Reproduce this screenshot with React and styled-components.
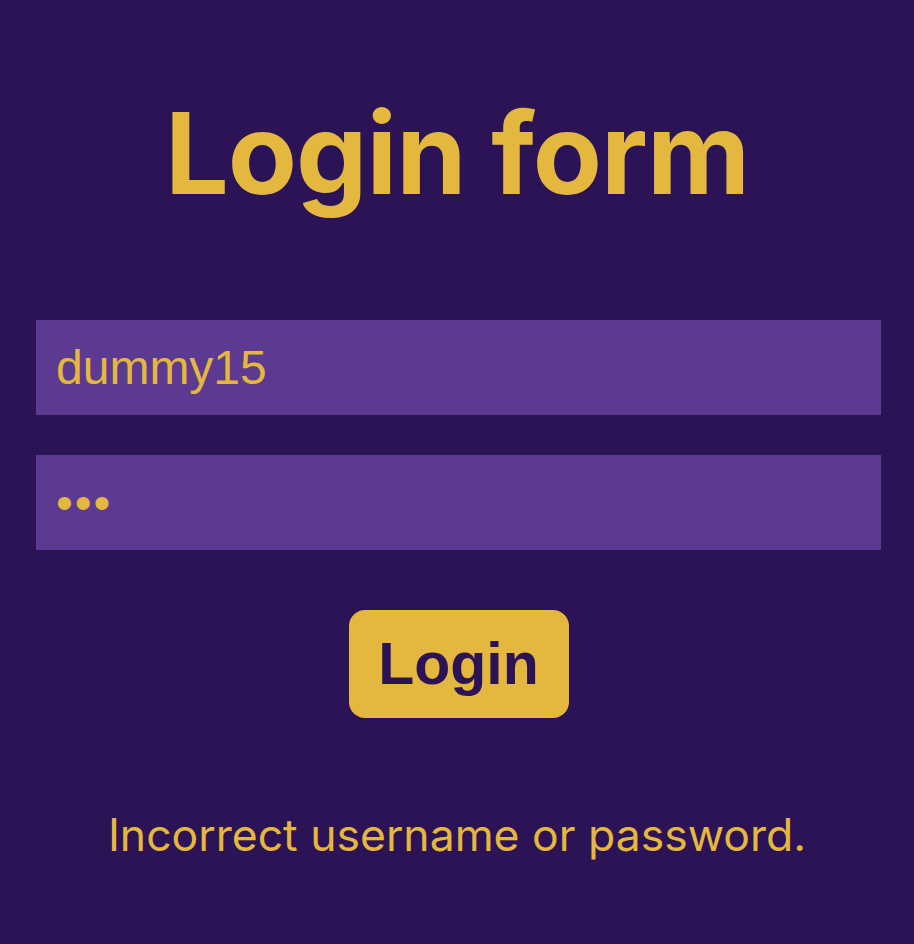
import React, { useState } from 'react';
import styled, { createGlobalStyle } from 'styled-components';

const GlobalStyle = createGlobalStyle`
  html, body {
    margin: 0;
    padding: 0;
    background-color: #2c1356;
  }
`;

const Page = styled.div`
  min-height: 944px;
  display: flex;
  flex-direction: column;
  align-items: center;
  background-color: #2c1356;
  font-family: Inter, 'Noto Sans', sans-serif;
  color: #e4b73f;
`;

const Title = styled.h1`
  margin: 85px 0 0;
  font-size: 113px;
  line-height: 137px;
  font-weight: 700;
  letter-spacing: -1px;
  color: #e4b73f;
`;

const Form = styled.form`
  align-self: stretch;
  display: flex;
  flex-direction: column;
  align-items: center;
  gap: 40px;
  margin: 98px 33px 0 36px;
`;

const Input = styled.input`
  box-sizing: border-box;
  width: 100%;
  height: 95px;
  padding: 0 20px;
  border: none;
  outline: none;
  background-color: #5c3a92;
  color: #e4b73f;
  font-family: 'Liberation Sans', Arial, sans-serif;
  font-size: 48px;
  letter-spacing: ${(p) => (p.type === 'password' ? '2px' : '0')};
`;

const Button = styled.button`
  margin-top: 20px;
  width: 220px;
  height: 108px;
  padding: 0;
  border: none;
  border-radius: 16px;
  background-color: #e4b73f;
  color: #2c1356;
  font-family: 'Liberation Sans', Arial, sans-serif;
  font-weight: 700;
  font-size: 59px;
  cursor: pointer;
`;

const Error = styled.p`
  margin: 90px 0 0;
  font-size: 44.5px;
  line-height: 54px;
  font-weight: 400;
  color: #e4b73f;
`;

export default function App() {
  const [username, setUsername] = useState('dummy15');
  const [password, setPassword] = useState('abc');

  return (
    <Page>
      <GlobalStyle />
      <Title>Login form</Title>
      <Form onSubmit={(e) => e.preventDefault()}>
        <Input type='text' value={username} onChange={(e) => setUsername(e.target.value)} />
        <Input type='password' value={password} onChange={(e) => setPassword(e.target.value)} />
        <Button type='submit'>Login</Button>
      </Form>
      <Error>Incorrect username or password.</Error>
    </Page>
  );
}
